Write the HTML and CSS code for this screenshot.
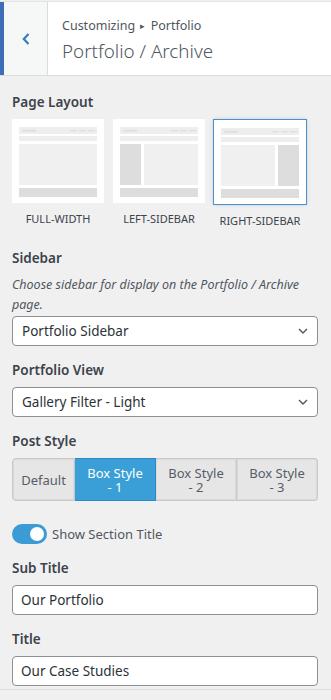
FILE: index.html
```html
<!DOCTYPE html>
<html lang="en">
<head>
  <meta charset="UTF-8">
  <meta name="viewport" content="width=device-width, initial-scale=1.0">
  <title>Portfolio / Archive</title>
  <link rel="stylesheet" href="styles.css">
</head>
<body>
  <div class="panel-header">
    <button class="back-button" aria-label="Back">
      <svg width="8" height="12" viewBox="0 0 8 12"><path d="M6.5 1 L1.8 6 L6.5 11" fill="none" stroke="#2f7fc1" stroke-width="2.2"/></svg>
    </button>
    <div class="panel-title">
      <span class="crumbs">Customizing <span class="sep">&#9656;</span> Portfolio</span>
      <h2>Portfolio / Archive</h2>
    </div>
  </div>

  <div class="controls">
    <div class="control layout-control">
      <span class="control-title">Page Layout</span>
      <div class="layouts">
        <div class="layout">
          <div class="thumb">
            <svg width="92" height="84" viewBox="0 0 92 84">
              <rect x="7" y="8" width="78" height="7" fill="#eeeeee"/>
              <rect x="10" y="10.5" width="14" height="2.5" fill="#e2e2e2"/>
              <rect x="58" y="11" width="7" height="1.2" fill="#dedede"/>
              <rect x="67" y="11" width="7" height="1.2" fill="#dedede"/>
              <rect x="76" y="11" width="7" height="1.2" fill="#dedede"/>
              <rect x="7" y="17" width="78" height="5" fill="#eeeeee"/>
              <rect x="7" y="25" width="78" height="41" fill="#f0f0f0"/>
              <rect x="7" y="69" width="78" height="9" fill="#dddddd"/>
            </svg>
          </div>
          <span class="layout-name">Full-width</span>
        </div>
        <div class="layout">
          <div class="thumb">
            <svg width="92" height="84" viewBox="0 0 92 84">
              <rect x="7" y="8" width="78" height="7" fill="#eeeeee"/>
              <rect x="10" y="10.5" width="14" height="2.5" fill="#e2e2e2"/>
              <rect x="58" y="11" width="7" height="1.2" fill="#dedede"/>
              <rect x="67" y="11" width="7" height="1.2" fill="#dedede"/>
              <rect x="76" y="11" width="7" height="1.2" fill="#dedede"/>
              <rect x="7" y="17" width="78" height="5" fill="#eeeeee"/>
              <rect x="7" y="25" width="21" height="41" fill="#dddddd"/>
              <rect x="31" y="25" width="54" height="41" fill="#f0f0f0"/>
              <rect x="7" y="69" width="78" height="9" fill="#dddddd"/>
            </svg>
          </div>
          <span class="layout-name">Left-sidebar</span>
        </div>
        <div class="layout selected">
          <div class="thumb">
            <svg width="92" height="84" viewBox="0 0 92 84">
              <rect x="7" y="8" width="78" height="7" fill="#eeeeee"/>
              <rect x="10" y="10.5" width="14" height="2.5" fill="#e2e2e2"/>
              <rect x="58" y="11" width="7" height="1.2" fill="#dedede"/>
              <rect x="67" y="11" width="7" height="1.2" fill="#dedede"/>
              <rect x="76" y="11" width="7" height="1.2" fill="#dedede"/>
              <rect x="7" y="17" width="78" height="5" fill="#eeeeee"/>
              <rect x="7" y="25" width="54" height="41" fill="#f0f0f0"/>
              <rect x="64" y="25" width="21" height="41" fill="#dddddd"/>
              <rect x="7" y="69" width="78" height="9" fill="#dddddd"/>
            </svg>
          </div>
          <span class="layout-name">Right-sidebar</span>
        </div>
      </div>
    </div>

    <div class="control">
      <span class="control-title">Sidebar</span>
      <span class="description">Choose sidebar for display on the Portfolio / Archive page.</span>
      <div class="select">
        <span>Portfolio Sidebar</span>
        <svg width="10" height="6" viewBox="0 0 10 6"><path d="M1 1 L5 5 L9 1" fill="none" stroke="#50575e" stroke-width="1.4"/></svg>
      </div>
    </div>

    <div class="control">
      <span class="control-title">Portfolio View</span>
      <div class="select">
        <span>Gallery Filter - Light</span>
        <svg width="10" height="6" viewBox="0 0 10 6"><path d="M1 1 L5 5 L9 1" fill="none" stroke="#50575e" stroke-width="1.4"/></svg>
      </div>
    </div>

    <div class="control">
      <span class="control-title">Post Style</span>
      <div class="button-set">
        <button class="narrow">Default</button>
        <button class="active">Box Style<br>- 1</button>
        <button>Box Style<br>- 2</button>
        <button>Box Style<br>- 3</button>
      </div>
    </div>

    <div class="control toggle-row">
      <span class="toggle"><span class="knob"></span></span>
      <span class="toggle-label">Show Section Title</span>
    </div>

    <div class="control">
      <span class="control-title">Sub Title</span>
      <input class="text-input" type="text" value="Our Portfolio">
    </div>

    <div class="control last">
      <span class="control-title">Title</span>
      <input class="text-input" type="text" value="Our Case Studies">
    </div>
  </div>
  <div class="panel-end"></div>
</body>
</html>
```

FILE: styles.css
```css
body {
  font-family: 'Noto Sans', 'Open Sans', sans-serif;
  margin: 0;
  padding: 0;
  height: 100vh;
  background-color: #f0f0f1;
  color: #50575e;
  overflow: hidden;
}

.panel-header {
  display: flex;
  height: 73px;
  margin-top: 1px;
  border-top: 1px solid #e4e4e4;
  border-bottom: 1px solid #dcdcde;
  background-color: #fff;
}

.back-button {
  width: 48px;
  border: none;
  border-left: 4px solid #3c6db5;
  border-right: 1px solid #dcdcde;
  background-color: #f6f7f7;
  padding: 0;
  display: flex;
  align-items: center;
  justify-content: center;
}

.panel-title {
  padding: 14px 0 0 14px;
}

.crumbs {
  display: block;
  font-size: 12.5px;
  line-height: 20px;
  color: #50575e;
}

.crumbs .sep {
  font-size: 9px;
  margin: 0 2px;
  position: relative;
  top: -1px;
}

.panel-title h2 {
  margin: 0;
  font-size: 18.8px;
  font-weight: 300;
  line-height: 28px;
  color: #50575e;
}

.controls {
  padding: 16px 13px 0 12px;
}

.control {
  margin-bottom: 14px;
}

.control.layout-control {
  margin-bottom: 19px;
}

.control-title {
  display: block;
  font-size: 13.5px;
  font-weight: 600;
  line-height: 20px;
  color: #3c434a;
  margin-bottom: 7px;
}

.layouts {
  display: grid;
  grid-template-columns: repeat(3, 92px);
  column-gap: 9px;
}

.layout {
  display: flex;
  flex-direction: column;
  align-items: center;
}

.thumb {
  width: 92px;
  height: 84px;
  background-color: #fff;
}

.thumb svg {
  display: block;
}

.layout.selected .thumb {
  outline: 1px solid #4a8fd6;
  outline-offset: 0;
  box-shadow: 0 0 4px rgba(0, 0, 0, 0.25);
  margin-top: 1px;
}

.layout-name {
  margin-top: 8px;
  font-size: 11px;
  line-height: 16px;
  text-transform: uppercase;
  color: #3c434a;
}

.layout.selected .layout-name {
  margin-top: 9px;
}

.description {
  display: block;
  margin-top: 1px;
  font-size: 12.5px;
  font-style: italic;
  line-height: 19.5px;
  color: #50575e;
  margin-bottom: 2px;
}

.select {
  box-sizing: border-box;
  height: 30px;
  border: 1px solid #8c8f94;
  border-radius: 4px;
  background-color: #fff;
  display: flex;
  align-items: center;
  justify-content: space-between;
  padding: 0 9px 0 9px;
  font-size: 13.5px;
  color: #2c3338;
}

.button-set {
  display: flex;
  height: 43px;
}

.button-set button {
  flex: 1;
  font-family: inherit;
  font-size: 13px;
  line-height: 14px;
  color: #555d66;
  background-color: #e6e6e6;
  border: 1px solid #c9c9c9;
  border-left-width: 0;
  box-shadow: inset 0 0 0 1px #dadada;
  padding: 0 4px;
}

.button-set button:first-child {
  border-left-width: 1px;
  border-radius: 4px 0 0 4px;
}

.button-set button:last-child {
  border-radius: 0 4px 4px 0;
}

.button-set button.narrow {
  flex: 0 0 63px;
}

.button-set button.active {
  background-color: #3a9fd6;
  border-color: #2f88c2;
  box-shadow: none;
  color: #fff;
}

.toggle-row {
  display: flex;
  align-items: center;
  margin-top: 23px;
}

.toggle {
  width: 35px;
  height: 20px;
  border-radius: 10px;
  background-color: #3a9bd5;
  display: flex;
  align-items: center;
  justify-content: flex-end;
  padding-right: 3px;
  box-sizing: border-box;
}

.knob {
  width: 14px;
  height: 14px;
  border-radius: 50%;
  background-color: #fff;
}

.toggle-label {
  margin-left: 5px;
  font-size: 13px;
  color: #50575e;
}

.text-input {
  display: block;
  box-sizing: border-box;
  width: 100%;
  height: 30px;
  border: 1px solid #8c8f94;
  border-radius: 4px;
  padding: 0 8px;
  font-family: inherit;
  font-size: 13.5px;
  color: #2c3338;
}

.control.last {
  margin-bottom: 3px;
}

.panel-end {
  border-top: 1px solid #dcdcde;
}
```
